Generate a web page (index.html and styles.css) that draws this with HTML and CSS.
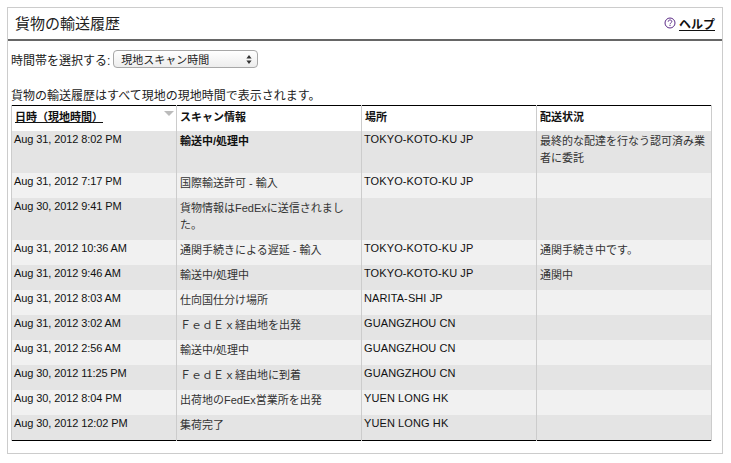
FILE: index.html
```html
<!DOCTYPE html>
<html lang="ja">
<head>
<meta charset="utf-8">
<title>貨物の輸送履歴</title>
<link rel="stylesheet" href="styles.css">
</head>
<body>
<section class="panel">
  <header class="panel-head">
    <h1 class="title">貨物の輸送履歴</h1>
    <div class="help">
      <svg class="help-icon" width="12" height="12" viewBox="0 0 12 12" aria-hidden="true">
        <circle cx="6" cy="6" r="5" fill="none" stroke="#5b2a86" stroke-width="1"/>
        <path d="M4.2 4.7c0-1.1.8-1.7 1.8-1.7s1.8.6 1.8 1.5c0 1.3-1.8 1.4-1.8 2.8" fill="none" stroke="#5b2a86" stroke-width="1"/>
        <rect x="5.5" y="8" width="1" height="1" fill="#5b2a86"/>
      </svg>
      <a class="help-link" href="#">ヘルプ</a>
    </div>
  </header>
  <div class="panel-body">
    <div class="zone-row">
      <span class="zone-label">時間帯を選択する:</span>
      <span class="select">
        <span class="select-text">現地スキャン時間</span>
        <svg class="select-arrows" width="6" height="9" viewBox="0 0 6 9" aria-hidden="true">
          <path d="M3 0 L5.6 3.4 H0.4 Z M3 9 L5.6 5.6 H0.4 Z" fill="#333"/>
        </svg>
      </span>
    </div>
    <p class="note">貨物の輸送履歴はすべて現地の現地時間で表示されます。</p>
    <table class="history">
      <colgroup>
        <col class="c1"><col class="c2"><col class="c3"><col class="c4">
      </colgroup>
      <thead>
        <tr>
          <th class="sorted"><a href="#">日時（現地時間）</a><span class="sort-arrow"></span></th>
          <th>スキャン情報</th>
          <th>場所</th>
          <th>配送状況</th>
        </tr>
      </thead>
      <tbody>
        <tr class="dark"><td class="when">Aug 31, 2012 8:02 PM</td><td class="ja"><b>輸送中/処理中</b></td><td class="place">TOKYO-KOTO-KU JP</td><td class="ja">最終的な配達を行なう認可済み業者に委託</td></tr>
        <tr class="light"><td class="when">Aug 31, 2012 7:17 PM</td><td class="ja">国際輸送許可 - 輸入</td><td class="place">TOKYO-KOTO-KU JP</td><td class="ja"></td></tr>
        <tr class="dark"><td class="when">Aug 30, 2012 9:41 PM</td><td class="ja">貨物情報はFedExに送信されました。</td><td class="place"></td><td class="ja"></td></tr>
        <tr class="light"><td class="when">Aug 31, 2012 10:36 AM</td><td class="ja">通関手続きによる遅延 - 輸入</td><td class="place">TOKYO-KOTO-KU JP</td><td class="ja">通関手続き中です。</td></tr>
        <tr class="dark"><td class="when">Aug 31, 2012 9:46 AM</td><td class="ja">輸送中/処理中</td><td class="place">TOKYO-KOTO-KU JP</td><td class="ja">通関中</td></tr>
        <tr class="light"><td class="when">Aug 31, 2012 8:03 AM</td><td class="ja">仕向国仕分け場所</td><td class="place">NARITA-SHI JP</td><td class="ja"></td></tr>
        <tr class="dark"><td class="when">Aug 31, 2012 3:02 AM</td><td class="ja">ＦｅｄＥｘ経由地を出発</td><td class="place">GUANGZHOU CN</td><td class="ja"></td></tr>
        <tr class="light"><td class="when">Aug 31, 2012 2:56 AM</td><td class="ja">輸送中/処理中</td><td class="place">GUANGZHOU CN</td><td class="ja"></td></tr>
        <tr class="dark"><td class="when">Aug 30, 2012 11:25 PM</td><td class="ja">ＦｅｄＥｘ経由地に到着</td><td class="place">GUANGZHOU CN</td><td class="ja"></td></tr>
        <tr class="light"><td class="when">Aug 30, 2012 8:04 PM</td><td class="ja">出荷地のFedEx営業所を出発</td><td class="place">YUEN LONG HK</td><td class="ja"></td></tr>
        <tr class="dark"><td class="when">Aug 30, 2012 12:02 PM</td><td class="ja">集荷完了</td><td class="place">YUEN LONG HK</td><td class="ja"></td></tr>
      </tbody>
    </table>
  </div>
</section>
</body>
</html>
```
FILE: styles.css
```css
html, body {
  margin: 0;
  padding: 0;
  background: #fff;
}
body {
  padding: 7px 0 0 7px;
  font-family: "Liberation Sans", "Noto Sans CJK JP", sans-serif;
  color: #111;
}
.panel {
  width: 716px;
  height: 447px;
  box-sizing: border-box;
  border: 1px solid #ccc;
}
.panel-head {
  height: 31px;
  border-bottom: 2px solid #666;
  display: flex;
  align-items: center;
  justify-content: space-between;
  padding: 0 7px 0 7px;
}
.title {
  margin: 0;
  font-size: 15px;
  font-weight: normal;
  line-height: 31px;
  color: #222;
}
.help {
  display: flex;
  align-items: center;
  gap: 3px;
  margin-top: -1px;
}
.help-link {
  font-size: 12px;
  font-weight: bold;
  color: #111;
}
.panel-body {
  padding: 8px 3px 0 3px;
}
.zone-row {
  display: flex;
  align-items: center;
  height: 20px;
  font-size: 12px;
}
.zone-label {
  color: #222;
}
.select {
  margin-left: 3px;
  width: 145px;
  height: 18px;
  box-sizing: border-box;
  display: flex;
  align-items: center;
  justify-content: space-between;
  padding: 0 5px 0 7px;
  border: 1px solid #a8a8a8;
  border-radius: 4px;
  background: linear-gradient(#fff, #ededed);
  font-size: 11px;
  color: #222;
}
.note {
  margin: 20px 0 0 0;
  height: 16px;
  font-size: 12px;
  line-height: 15px;
  color: #222;
}
.history {
  width: 700px;
  table-layout: fixed;
  border-collapse: collapse;
  border-top: 1px solid #000;
  border-bottom: 1px solid #000;
}
.c1 { width: 165px; }
.c2 { width: 185px; }
.c3 { width: 175px; }
.c4 { width: 175px; }
.history th {
  height: 25px;
  padding: 3px 3px 0 3px;
  text-align: left;
  vertical-align: top;
  font-size: 11px;
  font-weight: bold;
  line-height: 16px;
  border-right: 1px solid #ccc;
  border-left: 1px solid #ccc;
  box-sizing: border-box;
  color: #111;
  background: #fff;
}
.history th.sorted {
  position: relative;
}
.history th a {
  color: #111;
}
.sort-arrow {
  position: absolute;
  right: 2px;
  top: 5px;
  width: 0;
  height: 0;
  border-left: 5px solid transparent;
  border-right: 5px solid transparent;
  border-top: 5px solid #bbb;
}
.history td {
  height: 25px;
  box-sizing: border-box;
  padding: 2px 2px 6px 3px;
  vertical-align: top;
  border-left: 1px solid #ccc;
  border-right: 1px solid #ccc;
  overflow: hidden;
}
.history td.when {
  font-size: 11px;
  letter-spacing: -0.1px;
  line-height: 13px;
  padding-left: 2px;
  color: #111;
}
.history td.place {
  font-size: 11px;
  letter-spacing: 0.1px;
  line-height: 13px;
  padding-left: 2px;
  color: #111;
}
.history td.ja {
  font-size: 11px;
  line-height: 17px;
  color: #333;
}
.history td.ja b {
  color: #111;
}
.dark td { background: #e4e4e4; }
.light td { background: #f1f1f1; }
```
